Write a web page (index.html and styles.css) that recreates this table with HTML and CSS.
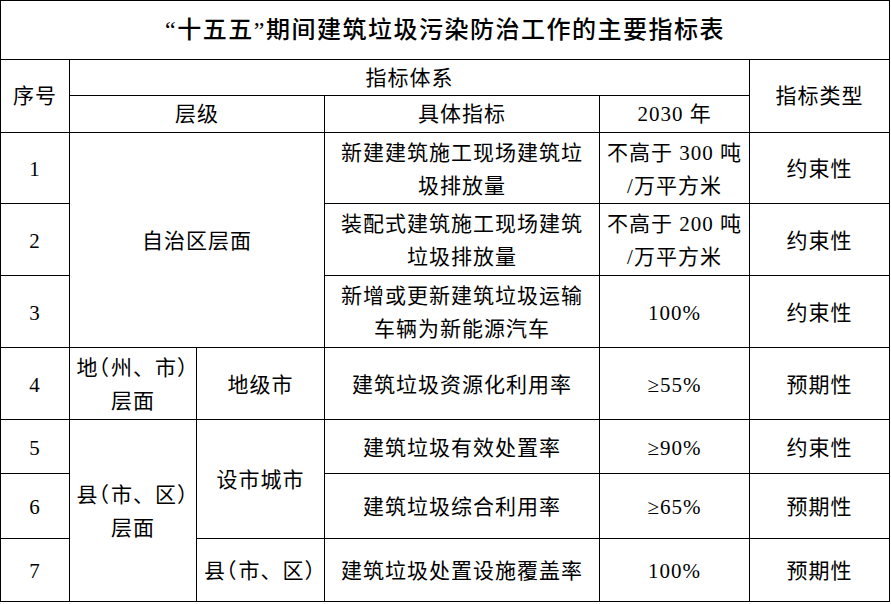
FILE: index.html
```html
<!DOCTYPE html>
<html lang="zh-CN">
<head>
<meta charset="utf-8">
<link rel="stylesheet" href="styles.css">
</head>
<body>
<table class="tbl">
  <colgroup>
    <col class="c-no"><col class="c-l1"><col class="c-l2"><col class="c-ind"><col class="c-val"><col class="c-type">
  </colgroup>
  <tr class="r-title"><td colspan="6" class="title">“十五五”期间建筑垃圾污染防治工作的主要指标表</td></tr>
  <tr class="r-h1"><td rowspan="2">序号</td><td colspan="4">指标体系</td><td rowspan="2">指标类型</td></tr>
  <tr class="r-h2"><td colspan="2">层级</td><td>具体指标</td><td>2030 年</td></tr>
  <tr class="r-a"><td>1</td><td colspan="2" rowspan="3">自治区层面</td><td>新建建筑施工现场建筑垃<br>圾排放量</td><td>不高于 300 吨<br>/万平方米</td><td>约束性</td></tr>
  <tr class="r-b"><td>2</td><td>装配式建筑施工现场建筑<br>垃圾排放量</td><td>不高于 200 吨<br>/万平方米</td><td>约束性</td></tr>
  <tr class="r-c"><td>3</td><td>新增或更新建筑垃圾运输<br>车辆为新能源汽车</td><td>100%</td><td>约束性</td></tr>
  <tr class="r-d"><td>4</td><td class="nw">地<span class="hb">（</span>州、市<span class="hb">）</span><br>层面</td><td>地级市</td><td>建筑垃圾资源化利用率</td><td>≥55%</td><td>预期性</td></tr>
  <tr class="r-e"><td>5</td><td rowspan="3" class="nw">县<span class="hb">（</span>市、区<span class="hb">）</span><br>层面</td><td rowspan="2">设市城市</td><td>建筑垃圾有效处置率</td><td>≥90%</td><td>约束性</td></tr>
  <tr class="r-f"><td>6</td><td>建筑垃圾综合利用率</td><td>≥65%</td><td>预期性</td></tr>
  <tr class="r-g"><td>7</td><td class="nw">县<span class="hb">（</span>市、区<span class="hb">）</span></td><td>建筑垃圾处置设施覆盖率</td><td>100%</td><td>预期性</td></tr>
</table>
</body>
</html>
```
FILE: styles.css
```css
html, body {
  margin: 0;
  padding: 0;
  background: #fff;
}
.tbl {
  border-collapse: collapse;
  table-layout: fixed;
  width: 889px;
  font-family: "Liberation Serif", "Noto Sans CJK SC", serif;
  font-size: 21px;
  letter-spacing: 1px;
  color: #000;
}
.tbl td {
  border: 1px solid #000;
  padding: 3px 0 0;
  text-align: center;
  vertical-align: middle;
  line-height: 33px;
}
.tbl td.nw {
  white-space: nowrap;
}
.hb {
  font-feature-settings: "halt" 1;
  letter-spacing: 2px;
}
.c-no { width: 69px; }
.c-l1 { width: 127px; }
.c-l2 { width: 128px; }
.c-ind { width: 275px; }
.c-val { width: 150px; }
.c-type { width: 140px; }
.tbl td.title {
  font-size: 24px;
  font-weight: 500;
  letter-spacing: 1.5px;
  padding-top: 0;
}
.r-title { height: 59px; }
.r-h1 { height: 36px; }
.r-h2 { height: 37px; }
.r-h1 td, .r-h2 td { padding-top: 0; line-height: 30px; }
.r-a { height: 71px; }
.r-b { height: 72px; }
.r-c { height: 72px; }
.r-d { height: 72px; }
.r-e { height: 54px; }
.r-f { height: 65px; }
.r-g { height: 63px; }
```
